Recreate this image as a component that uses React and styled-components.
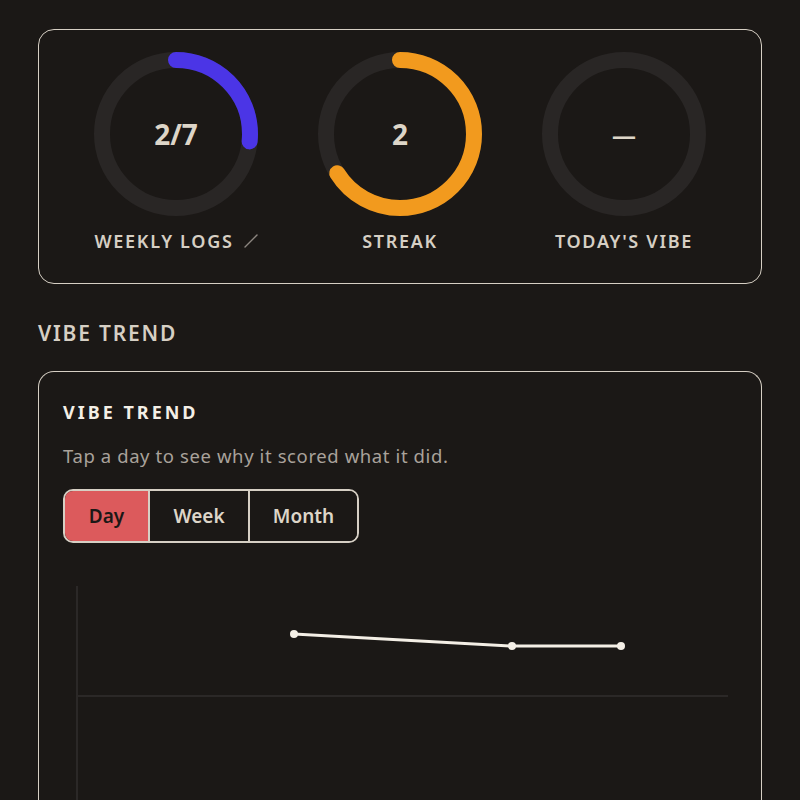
import React, { useState } from 'react';
import styled, { createGlobalStyle } from 'styled-components';

const GlobalStyle = createGlobalStyle`
  html, body {
    margin: 0;
    background: #1b1816;
  }
  body {
    font-family: "Noto Sans", "Open Sans", sans-serif;
    color: #d8d0c4;
  }
`;

const Page = styled.div`
  padding: 29px 38px 0;
  height: 771px;
  overflow: hidden;
`;

const Card = styled.section`
  border: 1.5px solid #d6cfc4;
  border-radius: 16px;
  background: #1b1816;
`;

const StatsCard = styled(Card)`
  display: grid;
  grid-template-columns: repeat(3, 1fr);
  padding: 22px 25px 30px;
`;

const Stat = styled.div`
  display: flex;
  flex-direction: column;
  align-items: center;
  gap: 13px;
`;

const RingWrap = styled.div`
  position: relative;
  width: 164px;
  height: 164px;
`;

const RingValue = styled.div`
  position: absolute;
  inset: 0;
  display: flex;
  align-items: center;
  justify-content: center;
  font-size: ${p => (p.$small ? 24 : 28)}px;
  font-weight: 700;
  color: #ddd5c8;
`;

const StatLabel = styled.div`
  display: flex;
  align-items: center;
  gap: 10px;
  font-size: 18px;
  font-weight: 600;
  letter-spacing: 1.7px;
  text-transform: uppercase;
  color: #d6cfc4;
`;

const SectionTitle = styled.h2`
  margin: 35px 0 24px;
  font-size: 21px;
  font-weight: 600;
  letter-spacing: 1.8px;
  color: #d6cfc4;
`;

const TrendCard = styled(Card)`
  padding: 28px 24px 0;
  border-bottom: none;
  border-bottom-left-radius: 0;
  border-bottom-right-radius: 0;
  min-height: 420px;
`;

const TrendTitle = styled.h3`
  margin: 0;
  font-size: 18px;
  font-weight: 700;
  letter-spacing: 3px;
  color: #f4efe6;
`;

const Hint = styled.p`
  margin: 19px 0 21px;
  font-size: 18.5px;
  letter-spacing: 0.6px;
  color: #a9a29b;
`;

const Segments = styled.div`
  display: inline-flex;
  border: 2px solid #d6cfc4;
  border-radius: 10px;
  overflow: hidden;
`;

const Segment = styled.button`
  box-sizing: border-box;
  height: 50px;
  width: ${p => p.$w}px;
  border: none;
  border-left: ${p => (p.$first ? 'none' : '2px solid #d6cfc4')};
  background: ${p => (p.$active ? '#dc5a5c' : '#1b1816')};
  color: ${p => (p.$active ? '#1b1816' : '#ddd5c8')};
  font-family: inherit;
  font-size: 19px;
  font-weight: 600;
  cursor: pointer;
`;

const Chart = styled.svg`
  display: block;
  margin-top: 28px;
`;

const Ring = ({ fraction, color }) => {
  const r = 74;
  const c = 2 * Math.PI * r;
  return (
    <svg width="164" height="164" viewBox="0 0 164 164">
      <circle cx="82" cy="82" r={r} fill="none" stroke="#292625" strokeWidth="16" />
      {fraction > 0 && (
        <circle
          cx="82"
          cy="82"
          r={r}
          fill="none"
          stroke={color}
          strokeWidth="16"
          strokeLinecap="round"
          strokeDasharray={`${c * fraction} ${c}`}
          transform="rotate(-90 82 82)"
        />
      )}
    </svg>
  );
};

const stats = [
  { label: 'Weekly logs', value: '2/7', fraction: 2 / 7 - 0.02, color: '#4b35e6', edit: true },
  { label: 'Streak', value: '2', fraction: 0.66, color: '#f29a1e' },
  { label: "Today's vibe", value: '—', fraction: 0, color: '#888', small: true }
];

const points = [
  [231, 63],
  [449, 75],
  [558, 75]
];

export default function App() {
  const [range, setRange] = useState('Day');
  const ranges = [
    ['Day', 83],
    ['Week', 100],
    ['Month', 109]
  ];

  return (
    <>
      <GlobalStyle />
      <Page>
        <StatsCard>
          {stats.map(s => (
            <Stat key={s.label}>
              <RingWrap>
                <Ring fraction={s.fraction} color={s.color} />
                <RingValue $small={s.small}>{s.value}</RingValue>
              </RingWrap>
              <StatLabel>
                {s.label}
                {s.edit && (
                  <svg width="14" height="14" viewBox="0 0 14 14">
                    <path d="M1 13 L13 1" stroke="#8d8680" strokeWidth="1.4" strokeLinecap="round" />
                  </svg>
                )}
              </StatLabel>
            </Stat>
          ))}
        </StatsCard>

        <SectionTitle>VIBE TREND</SectionTitle>

        <TrendCard>
          <TrendTitle>VIBE TREND</TrendTitle>
          <Hint>Tap a day to see why it scored what it did.</Hint>
          <Segments>
            {ranges.map(([name, w], i) => (
              <Segment
                key={name}
                $w={w}
                $first={i === 0}
                $active={range === name}
                onClick={() => setRange(name)}
              >
                {name}
              </Segment>
            ))}
          </Segments>
          <Chart width="676" height="240" viewBox="0 0 676 240">
            <line x1="14" y1="15" x2="14" y2="240" stroke="#2b2827" strokeWidth="2" />
            <line x1="14" y1="125" x2="665" y2="125" stroke="#2b2827" strokeWidth="2" />
            <polyline
              points={points.map(p => p.join(',')).join(' ')}
              fill="none"
              stroke="#f4efe6"
              strokeWidth="3"
              strokeLinejoin="round"
            />
            {points.map(([x, y]) => (
              <circle key={x} cx={x} cy={y} r="4" fill="#f4efe6" />
            ))}
          </Chart>
        </TrendCard>
      </Page>
    </>
  );
}
